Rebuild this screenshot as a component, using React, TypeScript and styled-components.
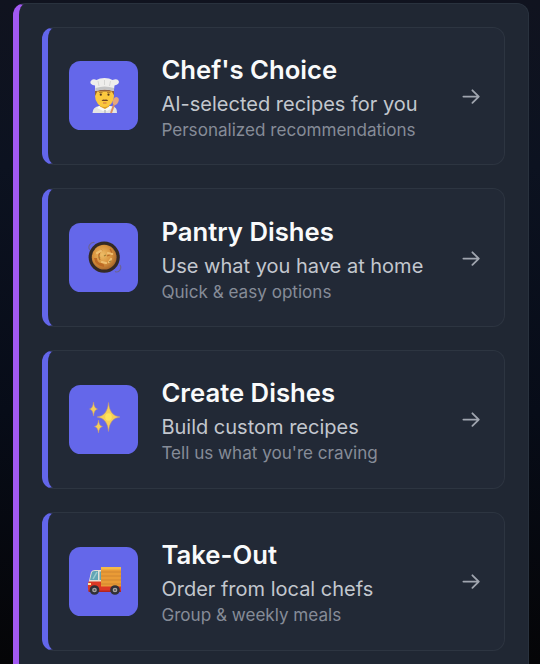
import React from "react";
import styled, { createGlobalStyle } from "styled-components";

const GlobalStyle = createGlobalStyle`
  * { box-sizing: border-box; }
  html, body { margin: 0; height: 664px; overflow: hidden; }
  body {
    background: linear-gradient(180deg, #10131f 0%, #0c1220 25%, #070c18 62%, #050507 100%);
    font-family: Inter, "Liberation Sans", sans-serif;
  }
`;

const Page = styled.main`
  height: 664px;
  overflow: hidden;
  padding: 2.5px 11px 0 13px;
`;

const Panel = styled.section`
  display: flex;
  flex-direction: column;
  gap: 23px;
  height: 720px;
  padding: 23px 23px 0 23px;
  background: #202733;
  border: 1px solid #29323e;
  border-left: 6px solid #a259f2;
  border-radius: 12px;
`;

const Card = styled.article`
  display: flex;
  align-items: center;
  flex: none;
  height: 138.8px;
  padding: 0 22px 0 21.4px;
  background: #222936;
  border: 1px solid #2d3541;
  border-left: 6px solid #6366ea;
  border-radius: 12px;
`;

const Tile = styled.div`
  display: flex;
  align-items: center;
  justify-content: center;
  flex: none;
  width: 69px;
  height: 69px;
  padding-left: 2px;
  border-radius: 11.5px;
  background: #6467ea;
`;

const Body = styled.div`
  flex: 1;
  margin-left: 23px;
  padding-top: 2px;
  white-space: nowrap;
`;

const Title = styled.h3`
  margin: 0;
  font-size: 25.7px;
  line-height: 34px;
  font-weight: 600;
  color: #f9fafb;
`;

const Lead = styled.p`
  margin: 0;
  padding-top: 2px;
  font-size: 20px;
  line-height: 30px;
  color: #c3c7ce;
`;

const Note = styled.p`
  margin: 0;
  font-size: 17.1px;
  line-height: 22px;
  color: #868c98;
`;

const Icon = styled.svg`
  display: block;
  flex: none;
`;

const Arrow = () => (
  <Icon width="24" height="24" viewBox="0 0 24 24" fill="none" stroke="#a0a5af" strokeWidth="1.8" strokeLinecap="round" strokeLinejoin="round">
    <path d="M5.400 12.600h15.400M14.400 6.300l6.400 6.300-6.400 6.300" />
  </Icon>
);

const Chef = () => (
  <Icon width="50" height="50" viewBox="0 0 50 50">
    <path d="M12.500 42q0-6 7-7h12q6 1 5.500 7z" fill="#e5e5e3" />
    <path d="M20 33h9v4l-4.500 2-4.500-2z" fill="#df9f26" />
    <path d="m19 35-2 2 6 3 2-1 2 1 5-3-2-2-5 3z" fill="#fafaf7" />
    <path d="M25 39v3" stroke="#a4a9ae" />
    <ellipse cx="24.500" cy="25" rx="9.500" ry="11" fill="#fbc83f" />
    <path d="M15 18h19v6l-2-3H17l-2 4z" fill="#94613a" />
    <path d="M17 20.500h15v5H17z" fill="#fbc83f" />
    <circle cx="20.800" cy="23.700" r="1.100" fill="#533820" />
    <circle cx="28.500" cy="23.700" r="1.100" fill="#533820" />
    <path d="M19 21.600h3.500M27 21.600h3.500" stroke="#9b6428" strokeWidth=".8" />
    <path d="M21.500 29.500q2-1.500 3.300-.7 1.700-.8 3.500.7-2 .9-3.500.4-1.500.5-3.300-.4z" fill="#734423" />
    <path d="M23 32h3.500" stroke="#ce6a46" />
    <path d="M15 14.500q-5.500-1-4.500-4 2-3.500 6-1.500 3-2 8-2t8 2q5-2 6.300 1 1 3-4.300 4.500l-.7 5.500q-9-3-18.600 0z" fill="#efeeec" />
    <path d="M15.500 17q9-3 18.500 0v3q-9-3-18.500 0z" fill="#c4c4c5" />
    <path d="m18 10 1 5m5.500-6v5m6-4-1 5" stroke="#cfcfce" strokeWidth=".8" />
    <path d="m35 31-4 11" stroke="#db8e61" strokeWidth="2" />
    <ellipse cx="35.700" cy="30" rx="2.800" ry="4" fill="#e6a67b" transform="rotate(22 35.700 30)" />
  </Icon>
);

const Pan = () => (
  <Icon width="50" height="50" viewBox="0 0 50 50">
    <defs>
      <radialGradient id="broth" cx="42%" cy="40%" r="62%">
        <stop offset="0" stopColor="#edbd67" />
        <stop offset=".6" stopColor="#d8923c" />
        <stop offset="1" stopColor="#a8672b" />
      </radialGradient>
    </defs>
    <g fill="none" stroke="#6b6395" strokeWidth="1.200">
      <path d="M10 17q-2-2-.5-5 2-3 5-2.500M35 38.500q3 1.500 5-1.500 1.500-3 0-5" />
    </g>
    <circle cx="24.200" cy="24.200" r="15.600" fill="#352a24" />
    <circle cx="24.200" cy="24.200" r="12.400" fill="url(#broth)" />
    <path d="M14 25q1 8 10 9 1-4-4-4-3-1-3-5z" fill="#bd6a25" />
    <path d="M22 17q-5 4-2 10M30 16q4 5-3 7" fill="none" stroke="#bb6b28" strokeWidth="1.300" />
    <path d="m17 20 4-2M28 20l4 1M22 29l4 1M31 26l-2 3" stroke="#efbf70" strokeWidth="2.200" strokeLinecap="round" />
    <path d="m24 23 2-1m-7 2 1 1m9 4 2-1" stroke="#9c8038" strokeWidth="1.200" />
  </Icon>
);

const Sparkles = () => (
  <Icon width="50" height="50" viewBox="0 0 50 50">
    <g fill="#f5cf57" stroke="#c79a72" strokeWidth=".5" strokeLinejoin="round">
      <path d="M28.500 8.500q1 13.500 11.500 14.500-10.500 1-11.500 14.500Q27.500 24 17 23q10.500-1 11.500-14.500z" />
      <path d="M13.500 8q.6 6.500 4 7-3.400.6-4 7-.6-6.400-4-7 3.400-.5 4-7z" />
      <path d="M18.500 26q.6 6 4 6.500-3.400.6-4 6.500-.6-5.900-4-6.500 3.400-.5 4-6.500z" />
    </g>
    <ellipse cx="28.500" cy="23" rx="3.300" ry="3.800" fill="#ffe45b" />
  </Icon>
);

const Truck = () => (
  <Icon width="50" height="50" viewBox="0 0 50 50">
    <path d="M8.500 27 11 16q1-2 4-2h8v18H8z" fill="#e6dfd4" />
    <path d="m10 24 2-8q1-1 3-1h3v9zM19.500 15.500H22V24h-2.500z" fill="#62a5b5" />
    <path d="m13 23 4-7" stroke="#9acdd0" strokeWidth="1.500" />
    <path d="M8.500 25.500H21V30h20v6H9q-2-4-.5-10.500z" fill="#dc3825" />
    <path d="M8 34.500h33V36H9z" fill="#b3241e" />
    <path d="M21 11.500h20V30.500H21z" fill="#e99b36" />
    <path d="M21 11h20v2.500H21z" fill="#f5ba4a" />
    <path d="M21 16h20M21 20h20M21 24h20M21 28h20" stroke="#c98131" strokeWidth=".8" />
    <path d="M8 27h3v2H8z" fill="#ffe4a0" />
    <g fill="#a6a3a4" stroke="#303037" strokeWidth="2.500">
      <circle cx="14.500" cy="34" r="3.600" />
      <circle cx="35" cy="34" r="3.600" />
    </g>
    <circle cx="14.500" cy="34" r="1" fill="#5a5559" />
    <circle cx="35" cy="34" r="1" fill="#5a5559" />
  </Icon>
);

const options = [
  { title: "Chef's Choice", lead: "AI-selected recipes for you", note: "Personalized recommendations", Art: Chef },
  { title: "Pantry Dishes", lead: "Use what you have at home", note: "Quick & easy options", Art: Pan },
  { title: "Create Dishes", lead: "Build custom recipes", note: "Tell us what you're craving", Art: Sparkles },
  { title: "Take-Out", lead: "Order from local chefs", note: "Group & weekly meals", Art: Truck },
];

export default function App() {
  return (
    <Page>
      <GlobalStyle />
      <Panel>
        {options.map(({ title, lead, note, Art }) => (
          <Card key={title}>
            <Tile><Art /></Tile>
            <Body>
              <Title>{title}</Title>
              <Lead>{lead}</Lead>
              <Note>{note}</Note>
            </Body>
            <Arrow />
          </Card>
        ))}
      </Panel>
    </Page>
  );
}
